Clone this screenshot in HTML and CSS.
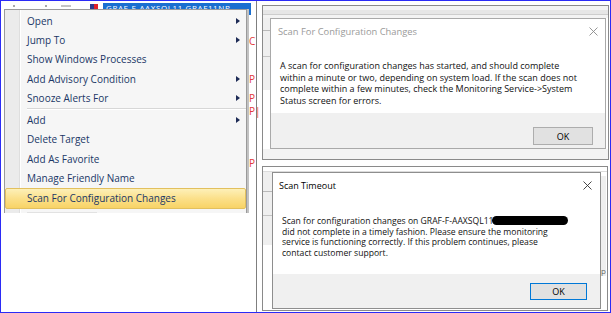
FILE: index.html
```html
<!DOCTYPE html>
<html lang="en">
<head>
    <meta charset="UTF-8">
    <title>Scan For Configuration Changes</title>
    <link rel="stylesheet" href="styles.css">
</head>
<body>
    <div class="shot">
        <div class="left">
            <div class="strip">
                <span class="tick t1"></span>
                <span class="tick t2"></span>
                <span class="tick t3"></span>
                <span class="flag"><i class="fr"></i><i class="fb"></i></span>
                <span class="sel">GRAF-F-AAXSQL11 GRAF11NP</span>
            </div>
            <div class="reds">
                <span class="m26">C</span>
                <span class="m26">P</span>
                <span class="m7">P</span>
                <span class="m1">P|</span>
                <span class="m40">P</span>
            </div>

            <div class="menu">
                <div class="item">Open <i class="arrow"></i></div>
                <div class="item">Jump To <i class="arrow"></i></div>
                <div class="item">Show Windows Processes</div>
                <div class="item">Add Advisory Condition <i class="arrow"></i></div>
                <div class="item">Snooze Alerts For <i class="arrow"></i></div>
                <div class="sep"></div>
                <div class="item">Add <i class="arrow"></i></div>
                <div class="item">Delete Target</div>
                <div class="item">Add As Favorite</div>
                <div class="item">Manage Friendly Name</div>
                <div class="item hot">Scan For Configuration Changes</div>
                <div class="item faint"><i class="ghost"></i></div>
            </div>
        </div>

        <div class="right">
            <div class="frame frame-top">
                <div class="band"></div>
                <div class="frame-row">
                    <div class="side side-a"></div>
                    <div class="dialog dlg-a">
                        <div class="title">
                            <span>Scan For Configuration Changes</span>
                            <svg class="close" width="9" height="9" viewBox="0 0 9 9"><path d="M0.5 0.5L8.5 8.5M8.5 0.5L0.5 8.5"/></svg>
                        </div>
                        <div class="body">
                            A scan for configuration changes has started, and should complete<br>
                            within a minute or two, depending on system load. If the scan does not<br>
                            complete within a few minutes, check the Monitoring Service-&gt;System<br>
                            Status screen for errors.
                        </div>
                        <div class="foot">
                            <div class="btn">OK</div>
                        </div>
                    </div>
                </div>
            </div>

            <div class="frame frame-bottom">
                <div class="frame-row low">
                    <div class="side side-b"></div>
                    <div class="dialog dlg-b">
                        <div class="title">
                            <span>Scan Timeout</span>
                            <svg class="close" width="9" height="9" viewBox="0 0 9 9"><path d="M0.5 0.5L8.5 8.5M8.5 0.5L0.5 8.5"/></svg>
                        </div>
                        <div class="body">
                            Scan for configuration changes on GRAF-F-AAXSQL11<span class="redact"></span><br>
                            did not complete in a timely fashion. Please ensure the monitoring<br>
                            service is functioning correctly. If this problem continues, please<br>
                            contact customer support.
                        </div>
                        <div class="foot">
                            <div class="btn btn-default">OK</div>
                        </div>
                    </div>
                    <div class="side side-c"><span>p</span></div>
                </div>
            </div>
        </div>
    </div>
</body>
</html>
```

FILE: styles.css
```css
body {
    margin: 0;
    background-color: #fff;
    font-family: "Open Sans", "Noto Sans", sans-serif;
}
.shot {
    width: 611px;
    height: 313px;
    box-sizing: border-box;
    border: 1px solid #2b2bf6;
    display: flex;
    overflow: hidden;
    background-color: #fff;
}

/* left side: grid behind a context menu */
.left {
    position: relative;
    width: 255px;
    flex: none;
    border-right: 1px solid #7f7f7f;
}
.strip {
    height: 8px;
    display: flex;
    align-items: flex-start;
    position: relative;
}
.tick {
    width: 2px;
    height: 2px;
    margin-top: 4px;
    background-color: #a8a8a8;
}
.t1 { margin-left: 12px; }
.t2 { margin-left: 30px; }
.t3 { margin-left: 14px; width: 10px; background-color: #c4c4c4; }
.flag {
    display: flex;
    margin: 3px 0 0 19px;
}
.flag i {
    width: 4px;
    height: 6px;
}
.fr { background-color: #2c3a8c; }
.fb { background-color: #e0202c; }
.sel {
    margin: 2px 0 0 5px;
    width: 148px;
    height: 12px;
    flex: none;
    background-color: #1a6fd0;
    color: #fff;
    font-size: 8px;
    line-height: 9px;
    padding-left: 3px;
    box-sizing: border-box;
    overflow: hidden;
    white-space: nowrap;
    letter-spacing: 0.6px;
}
.reds {
    margin-left: 248px;
    display: flex;
    flex-direction: column;
    color: #e23b3b;
    font-size: 10px;
    line-height: 12px;
}
.m26 { margin-top: 26px; }
.m7 { margin-top: 7px; }
.m1 { margin-top: 1px; }
.m40 { margin-top: 40px; }

.menu {
    position: absolute;
    left: 3px;
    top: 8px;
    width: 243px;
    height: 204px;
    box-sizing: border-box;
    border: 1px solid #9a9a9a;
    border-bottom: none;
    padding-top: 1px;
    overflow: hidden;
    color: #213766;
    font-size: 10px;
    background: linear-gradient(to right, #ebebeb 0, #ebebeb 14px, #dedede 14px, #dedede 15px, #fff 15px, #fff 16px, #f6f6f6 16px);
    box-shadow: 2px 0 0 #c2c2c2;
}
.item {
    height: 19.3px;
    display: flex;
    align-items: center;
    justify-content: space-between;
    padding: 0 6px 0 22px;
    white-space: nowrap;
}
.arrow {
    width: 0;
    height: 0;
    border-left: 4px solid #1d2b55;
    border-top: 3.5px solid transparent;
    border-bottom: 3.5px solid transparent;
}
.sep {
    margin: 1px 0 0 22px;
    border-top: 1px solid #d7d7d7;
    border-bottom: 1px solid #fff;
}
.item.hot {
    padding-left: 21px;
    border: 1px solid #e2c05e;
    border-radius: 2px;
    background: linear-gradient(#fdf0b8, #fbe08a 50%, #f8d366);
}
.item.faint {
    align-items: flex-start;
    padding-top: 3px;
    box-sizing: border-box;
}
.ghost {
    width: 70px;
    height: 3px;
    background-color: #e2e2e2;
}

/* right side: two dialog captures */
.right {
    flex: 1;
    display: flex;
    flex-direction: column;
    gap: 6px;
    padding: 4px 0 0 5px;
}
.frame {
    box-sizing: border-box;
    border: 1px solid #8a8a8a;
    overflow: hidden;
}
.frame-top {
    width: 347px;
    height: 155px;
    background-color: #f3f3f3;
}
.frame-bottom {
    width: 346px;
    height: 145px;
    background-color: #fff;
}
.band {
    margin-top: 4px;
    height: 4px;
    background-color: #e6e6e6;
    border-bottom: 1px solid #cdcdcd;
}
.frame-row {
    display: flex;
    align-items: flex-start;
    margin-top: 3px;
    background-color: #fff;
}
.frame-row.low {
    margin-top: 4px;
    border-top: 1px solid #dcdcdc;
}
.side {
    flex: none;
    background-color: #efefef;
}
.side-a {
    width: 7px;
    height: 72px;
    background: linear-gradient(#efefef 12px, #b9b9b9 12px, #b9b9b9 13px, #efefef 13px, #efefef 38px, #c4c4c4 38px, #c4c4c4 39px, #efefef 39px);
}
.side-b {
    width: 9px;
    height: 73px;
    background: linear-gradient(#efefef 19px, #b9b9b9 19px, #b9b9b9 20px, #efefef 20px, #efefef 43px, #c4c4c4 43px, #c4c4c4 44px, #efefef 44px);
}
.side-c {
    width: 5px;
    height: 100px;
    margin-top: 4px;
    display: flex;
    flex-direction: column;
    justify-content: flex-end;
    color: #666;
    font-size: 8px;
    line-height: 10px;
    overflow: hidden;
}

.dialog {
    flex: none;
    box-sizing: border-box;
    display: flex;
    flex-direction: column;
    background-color: #fff;
}
.dlg-a {
    width: 336px;
    height: 131px;
    border: 1px solid #a9a9a9;
    color: #111;
}
.dlg-b {
    width: 329px;
    height: 137px;
    border: 1px solid #8e8e8e;
    color: #111;
}
.title {
    display: flex;
    align-items: center;
    justify-content: space-between;
    white-space: nowrap;
}
.dlg-a .title {
    height: 25px;
    padding: 0 7px;
    font-size: 9.35px;
    color: #9a9a9a;
}
.dlg-b .title {
    height: 24px;
    padding: 0 8px 0 6px;
    font-size: 9px;
    color: #000;
}
.close {
    fill: none;
    stroke: #8a8a8a;
    stroke-width: 0.9;
}
.dlg-b .close {
    stroke: #333;
}
.body {
    flex: 1;
    white-space: nowrap;
}
.dlg-a .body {
    padding: 16px 0 0 9px;
    font-size: 9px;
    line-height: 11.5px;
}
.dlg-b .body {
    padding: 19px 0 0 9px;
    font-size: 8.6px;
    line-height: 10.5px;
}
.redact {
    display: inline-block;
    width: 76px;
    height: 9px;
    margin-left: -2px;
    border-radius: 5px;
    background-color: #000;
    vertical-align: -1px;
}
.foot {
    display: flex;
    justify-content: flex-end;
    align-items: flex-start;
    box-sizing: border-box;
    background-color: #f0f0f0;
}
.dlg-a .foot {
    height: 35px;
    padding: 14px 12px 0 0;
}
.dlg-b .foot {
    height: 34px;
    padding: 9px 13px 0 0;
}
.btn {
    box-sizing: border-box;
    display: flex;
    align-items: center;
    justify-content: center;
    border: 1px solid #adadad;
    background-color: #e1e1e1;
    color: #000;
    font-size: 9px;
}
.dlg-a .btn {
    width: 60px;
    height: 18px;
}
.btn.btn-default {
    width: 57px;
    height: 17px;
    border-color: #0078d7;
}
```
